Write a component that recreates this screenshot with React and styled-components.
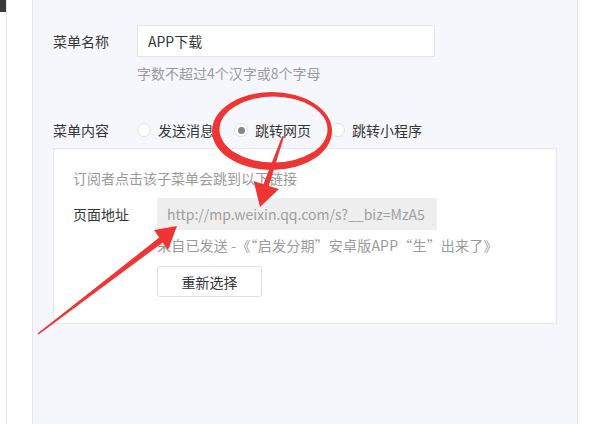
import styled, { createGlobalStyle } from "styled-components";

const GlobalStyle = createGlobalStyle`
  html, body {
    margin: 0;
    padding: 0;
    background: #fff;
  }
  body {
    font-family: "Noto Sans CJK SC", "Noto Sans", sans-serif;
    font-size: 14px;
    color: #353535;
  }
`;

const options = [
  { label: "发送消息", checked: false },
  { label: "跳转网页", checked: true },
  { label: "跳转小程序", checked: false },
];

const App = () => {
  return (
    <Page>
      <GlobalStyle />
      <Rail>
        <RailTab />
      </Rail>

      <Panel>
        <Field>
          <Label $h={32}>菜单名称</Label>
          <div>
            <TextBox>APP下载</TextBox>
            <Hint>字数不超过4个汉字或8个字母</Hint>
          </div>
        </Field>

        <Field $top={37}>
          <Label $h={20}>菜单内容</Label>
          <Radios>
            {options.map((o) => (
              <RadioItem key={o.label}>
                <RadioDot $checked={o.checked} />
                <span>{o.label}</span>
              </RadioItem>
            ))}
          </Radios>
        </Field>

        <Card>
          <Desc>订阅者点击该子菜单会跳到以下链接</Desc>
          <Field $top={10}>
            <Label $h={32}>页面地址</Label>
            <div>
              <UrlBox>http://mp.weixin.qq.com/s?__biz=MzA5</UrlBox>
              <Source>来自已发送 -《“启发分期”安卓版APP“生”出来了》</Source>
              <Button>重新选择</Button>
            </div>
          </Field>
        </Card>
      </Panel>

      {/* red hand-drawn marks on top of the screenshot */}
      <Marks viewBox="0 0 607 424" width="607" height="424">
        <path
          fillRule="evenodd"
          d="M212 131 a60 39 0 1 0 120 0 a60 39 0 1 0 -120 0 Z M219.5 129.5 a54 33 0 1 0 108 0 a54 33 0 1 0 -108 0 Z"
        />
        <polygon points="282.2,136 284,136.6 268.8,186 279,189 260,207 253.6,181 263.4,184.2" />
        <polygon points="37.5,333.4 38.6,334.6 162.8,242.4 168,250 177,226 154,230 159.2,237.6" />
      </Marks>
    </Page>
  );
};

const Page = styled.div`
  position: relative;
  display: flex;
  height: 100vh;
  min-height: 424px;
  overflow: hidden;
`;

const Rail = styled.div`
  width: 6px;
  border-right: 1px solid #e4e4e4;
`;

const RailTab = styled.div`
  height: 12px;
  background: #3a3a3a;
`;

const Panel = styled.div`
  box-sizing: border-box;
  width: 546px;
  margin-left: 25px;
  padding: 25px 20px 0 20px;
  background: #f6f7fd;
  border-left: 1px solid #e3e5ee;
  border-right: 1px solid #e3e5ee;
`;

const Field = styled.div`
  display: flex;
  align-items: flex-start;
  margin-top: ${(p) => p.$top || 0}px;
`;

const Label = styled.div`
  flex: 0 0 84px;
  line-height: ${(p) => p.$h}px;
  color: #353535;
  white-space: nowrap;
`;

const TextBox = styled.div`
  box-sizing: border-box;
  width: 298px;
  height: 32px;
  padding: 0 10px;
  line-height: 30px;
  background: #fff;
  border: 1px solid #e4e4e8;
  color: #353535;
`;

const Hint = styled.div`
  margin-top: 6px;
  line-height: 20px;
  color: #9a9a9a;
`;

const Radios = styled.div`
  display: flex;
  align-items: center;
  height: 20px;
`;

const RadioItem = styled.label`
  display: flex;
  align-items: center;
  gap: 7px;
  margin-right: 20px;
  line-height: 20px;
  color: #353535;
  white-space: nowrap;
`;

const RadioDot = styled.span`
  position: relative;
  box-sizing: border-box;
  width: 14px;
  height: 14px;
  border-radius: 50%;
  border: 1px solid #dcdde0;
  background: #fff;

  &::after {
    content: "";
    display: ${(p) => (p.$checked ? "block" : "none")};
    position: absolute;
    left: 2.5px;
    top: 2.5px;
    width: 7px;
    height: 7px;
    border-radius: 50%;
    background: #858585;
  }
`;

const Card = styled.div`
  box-sizing: border-box;
  width: 504px;
  margin-top: 8px;
  padding: 19px 19px 26px;
  background: #fff;
  border: 1px solid #e6e7eb;
`;

const Desc = styled.div`
  line-height: 20px;
  color: #9a9a9a;
`;

const UrlBox = styled.div`
  box-sizing: border-box;
  width: 280px;
  height: 32px;
  padding: 0 10px;
  line-height: 32px;
  background: #eeeeee;
  color: #a0a0a0;
  white-space: nowrap;
  overflow: hidden;
`;

const Source = styled.div`
  margin-top: 5px;
  line-height: 20px;
  color: #9a9a9a;
  white-space: nowrap;
  letter-spacing: 0.2px;
`;

const Button = styled.button`
  box-sizing: border-box;
  display: block;
  width: 105px;
  height: 31px;
  margin-top: 11px;
  padding: 0;
  font: inherit;
  color: #353535;
  background: #fff;
  border: 1px solid #e0e0e0;
  border-radius: 3px;
`;

const Marks = styled.svg`
  position: absolute;
  left: 0;
  top: 0;
  pointer-events: none;
  fill: #ef3434;
`;

export default App;
